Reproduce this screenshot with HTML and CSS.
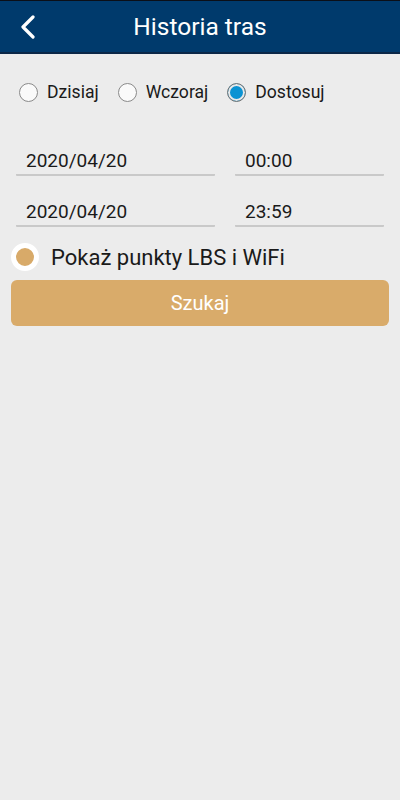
FILE: index.html
```html
<!DOCTYPE html>
<html lang="pl">
<head>
  <meta charset="UTF-8" />
  <title>Historia tras</title>
  <link rel="stylesheet" href="styles.css">
</head>
<body>

  <header class="topbar">
    <a class="back" href="#">
      <svg width="16" height="24" viewBox="0 0 16 24">
        <path d="M13 2 L3 12 L13 22" fill="none" stroke="#fff" stroke-width="3.2" stroke-linecap="round" stroke-linejoin="round"/>
      </svg>
    </a>
    <h1>Historia tras</h1>
  </header>

  <main>
    <div class="range">
      <label class="radio"><span class="dot"></span>Dzisiaj</label>
      <label class="radio"><span class="dot"></span>Wczoraj</label>
      <label class="radio on"><span class="dot"></span>Dostosuj</label>
    </div>

    <div class="fields">
      <div class="field">2020/04/20</div>
      <div class="field">00:00</div>
      <div class="field">2020/04/20</div>
      <div class="field">23:59</div>
    </div>

    <label class="toggle"><span class="knob"></span>Pokaż punkty LBS i WiFi</label>

    <button class="search">Szukaj</button>
  </main>

</body>
</html>
```

FILE: styles.css
```css
body {
  font-family: Roboto, 'Noto Sans', sans-serif;
  margin: 0;
  background: #ececec;
  color: #1a1a1a;
  min-height: 800px;
}
.topbar {
  height: 51px;
  border-top: 1px solid #0b0f18;
  border-bottom: 2px solid #0b2747;
  background: #003a6c;
  color: white;
  display: flex;
  align-items: center;
  justify-content: center;
  position: relative;
}
.topbar h1 {
  margin: 0;
  font-size: 24.5px;
  font-weight: normal;
}
.back {
  position: absolute;
  left: 20px;
  top: 14px;
}
main {
  padding: 0 11px;
}
.range {
  display: flex;
  align-items: center;
  padding: 28px 0 0 8px;
  height: 20px;
}
.radio {
  display: flex;
  align-items: center;
  font-size: 17.6px;
  margin-right: 19px;
}
.dot {
  width: 17px;
  height: 17px;
  border: 1px solid #8a8a8a;
  border-radius: 50%;
  margin-right: 9px;
  box-sizing: content-box;
  background: #fafafa;
}
.radio.on .dot {
  background: #0b93d3;
  box-shadow: inset 0 0 0 2px #e8e8e8;
  border-color: #777;
}
.fields {
  display: grid;
  grid-template-columns: 199fr 149fr;
  column-gap: 20px;
  row-gap: 16px;
  margin: 39px 5px 0;
}
.field {
  font-size: 19px;
  padding: 8px 0 2px 10px;
  height: 23px;
  border-bottom: 2px solid #c9c9c9;
  border-radius: 0 0 1px 1px;
}
.toggle {
  display: flex;
  align-items: center;
  font-size: 22px;
  margin-top: 15px;
  height: 30px;
}
.knob {
  width: 18px;
  height: 18px;
  border: 5px solid white;
  border-radius: 50%;
  background: #d8aa69;
  margin-right: 12px;
}
.search {
  display: block;
  width: 100%;
  height: 46px;
  margin-top: 8px;
  border: none;
  border-radius: 6px;
  background: #d9ab6a;
  color: white;
  font-family: inherit;
  font-size: 20px;
}
```
